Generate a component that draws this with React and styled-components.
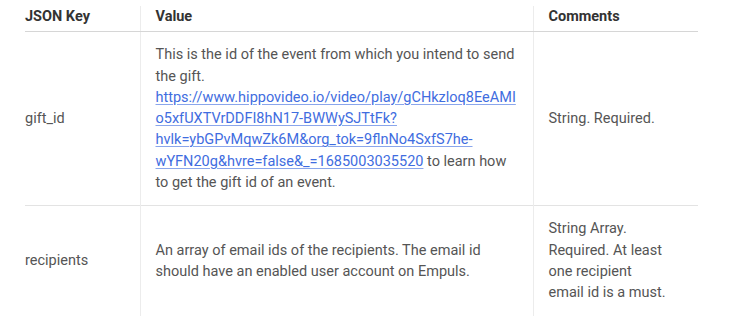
import React from "react";
import styled, { createGlobalStyle } from "styled-components";

const Global = createGlobalStyle`
  html, body { margin: 0; padding: 0; background: #fff; }
  body { font-family: Roboto, "Noto Sans", sans-serif; }
`;

const Page = styled.div`
  padding: 6px 0 0 25px;
`;

const Table = styled.table`
  width: 673px;
  border-collapse: collapse;
  table-layout: fixed;
  font-size: 14.5px;
  line-height: 21.3px;
  color: #555;
`;

const Th = styled.th`
  text-align: left;
  font-weight: 700;
  color: #333;
  padding: 0 15px 4px;
  border-bottom: 1px solid #d6d6d6;
  border-left: 1px solid #ececec;
  &:first-child { padding-left: 0; border-left: none; }
`;

const Td = styled.td`
  vertical-align: middle;
  padding: 12px 15px;
  border-left: 1px solid #ececec;
  overflow-wrap: break-word;
  word-wrap: break-word;
  &:first-child { padding-left: 0; border-left: none; }
  &:last-child { padding-right: 28px; }
`;

const Tr = styled.tr`
  & + & td { border-top: 1px solid #e3e3e3; }
`;

const Link = styled.a`
  color: #3f6de0;
  text-decoration: underline;
  text-decoration-color: #8aa6ec;
  text-underline-offset: 2px;
`;

const url =
  "https://www.hippovideo.io/video/play/gCHkzloq8EeAMIo5xfUXTVrDDFI8hN17-BWWySJTtFk?hvlk=ybGPvMqwZk6M&org_tok=9flnNo4SxfS7he-wYFN20g&hvre=false&_=1685003035520";

export default function App() {
  return (
    <Page>
      <Global />
      <Table>
        <colgroup>
          <col style={{ width: 115 }} />
          <col style={{ width: 393 }} />
          <col style={{ width: 165 }} />
        </colgroup>
        <thead>
          <tr>
            <Th>JSON Key</Th>
            <Th>Value</Th>
            <Th>Comments</Th>
          </tr>
        </thead>
        <tbody>
          <Tr>
            <Td>gift_id</Td>
            <Td>
              This is the id of the event from which you intend to send the gift.{" "}
              <Link href="#">{url}</Link> to learn how to get the gift id of an event.
            </Td>
            <Td>String. Required.</Td>
          </Tr>
          <Tr>
            <Td>recipients</Td>
            <Td>
              An array of email ids of the recipients. The email id should have an
              enabled user account on Empuls.
            </Td>
            <Td>String Array. Required. At least one recipient email id is a must.</Td>
          </Tr>
        </tbody>
      </Table>
    </Page>
  );
}
